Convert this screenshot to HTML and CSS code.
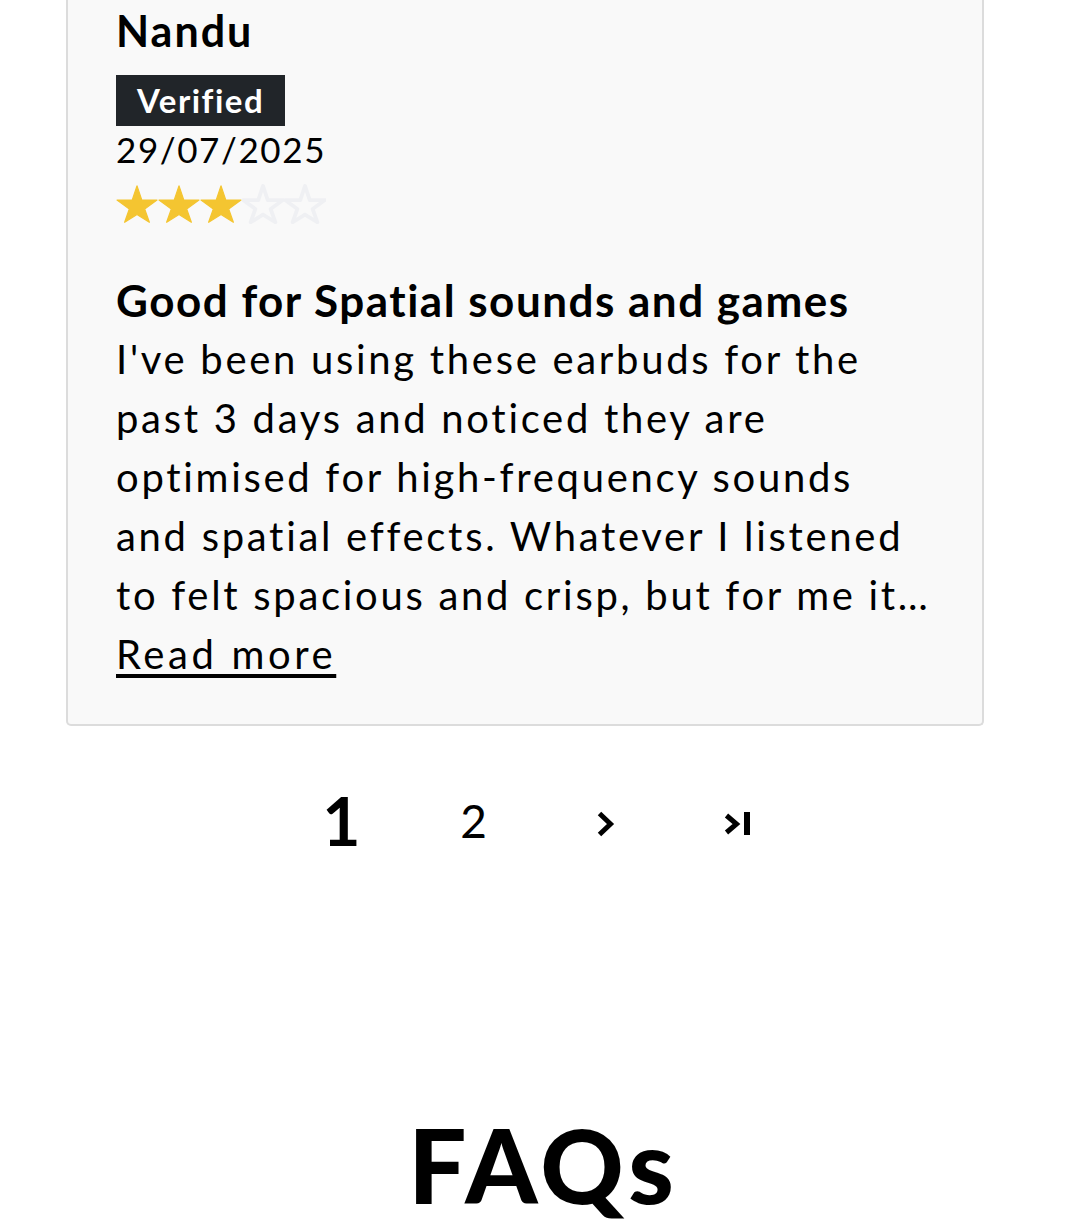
FILE: index.html
```html
<!DOCTYPE html>
<html lang="en">
<head>
<meta charset="utf-8">
<title>Reviews</title>
<link rel="stylesheet" href="styles.css">
</head>
<body>
<main class="page">
  <div class="card-wrap">
    <article class="review-card">
      <div class="reviewer">Nandu</div>
      <span class="badge">Verified</span>
      <div class="date">29/07/2025</div>
      <div class="stars" aria-label="3 out of 5 stars">
        <svg class="star full" viewBox="0 0 100 92"><polygon points="50,3 61.23,36.55 97.55,36.55 68.17,57.9 79.39,89.45 50,71.1 20.61,89.45 31.83,57.9 2.45,36.55 38.77,36.55"/></svg>
        <svg class="star full" viewBox="0 0 100 92"><polygon points="50,3 61.23,36.55 97.55,36.55 68.17,57.9 79.39,89.45 50,71.1 20.61,89.45 31.83,57.9 2.45,36.55 38.77,36.55"/></svg>
        <svg class="star full" viewBox="0 0 100 92"><polygon points="50,3 61.23,36.55 97.55,36.55 68.17,57.9 79.39,89.45 50,71.1 20.61,89.45 31.83,57.9 2.45,36.55 38.77,36.55"/></svg>
        <svg class="star empty" viewBox="0 0 100 92"><polygon points="50,3 61.23,36.55 97.55,36.55 68.17,57.9 79.39,89.45 50,71.1 20.61,89.45 31.83,57.9 2.45,36.55 38.77,36.55"/></svg>
        <svg class="star empty" viewBox="0 0 100 92"><polygon points="50,3 61.23,36.55 97.55,36.55 68.17,57.9 79.39,89.45 50,71.1 20.61,89.45 31.83,57.9 2.45,36.55 38.77,36.55"/></svg>
      </div>
      <h3 class="review-title">Good for Spatial sounds and games</h3>
      <p class="review-body">I've been using these earbuds for the past 3 days and noticed they are optimised for high-frequency sounds and spatial effects. Whatever I listened to felt spacious and crisp, but for me it lacks the deep bass punch that I usually prefer when listening to music.</p>
      <a class="read-more" href="#">Read more</a>
    </article>
  </div>

  <nav class="pagination" aria-label="Pagination">
    <span class="page-num current">1</span>
    <a class="page-num" href="#">2</a>
    <a class="page-icon" href="#" aria-label="Next page">
      <svg width="18" height="26" viewBox="0 0 18 26"><path d="M2.5 2.5l11 10.5-11 10.5" fill="none" stroke="#000" stroke-width="5"/></svg>
    </a>
    <a class="page-icon" href="#" aria-label="Last page">
      <svg width="28" height="26" viewBox="0 0 28 26"><path d="M2.5 4.5l10 8.5-10 8.5" fill="none" stroke="#000" stroke-width="5"/><rect x="20" y="1" width="6" height="23" fill="#000"/></svg>
    </a>
  </nav>

  <h2 class="faqs">FAQs</h2>
</main>
</body>
</html>
```

FILE: styles.css
```css
html, body {
  margin: 0;
  padding: 0;
  background: #fff;
}

body {
  font-family: "Lato", "Open Sans", sans-serif;
  color: #000;
}

.card-wrap {
  padding: 0 95px 0 66px;
}

.review-card {
  margin-top: -40px;
  background: #f9f9f9;
  border: 2px solid #dcdcdc;
  border-top: none;
  border-radius: 0 0 5px 5px;
  padding: 46px 48px 40px 48px;
  display: flex;
  flex-direction: column;
  align-items: flex-start;
}

.reviewer {
  font-size: 43px;
  font-weight: 700;
  line-height: 50px;
  letter-spacing: 2px;
}

.badge {
  margin-top: 19px;
  background: #212529;
  color: #fff;
  font-size: 33px;
  font-weight: 700;
  line-height: 51px;
  letter-spacing: 1.5px;
  padding: 0 21px;
}

.date {
  margin-top: 0;
  font-size: 35px;
  line-height: 46px;
  letter-spacing: 1.6px;
}

.stars {
  display: flex;
  margin-top: 12px;
}

.star {
  width: 42px;
  height: 40px;
}

.star.full polygon {
  fill: #f4c531;
  stroke: #f4c531;
  stroke-width: 3;
  stroke-linejoin: round;
}

.star.empty polygon {
  fill: none;
  stroke: #eff0f3;
  stroke-width: 9;
  stroke-linejoin: round;
}

.review-title {
  margin: 47px 0 0;
  font-size: 44px;
  font-weight: 700;
  line-height: 59px;
  letter-spacing: 1.5px;
}

.review-body {
  margin: 0;
  font-size: 40px;
  line-height: 59px;
  letter-spacing: 2.7px;
  display: -webkit-box;
  -webkit-line-clamp: 5;
  -webkit-box-orient: vertical;
  overflow: hidden;
}

.read-more {
  color: #000;
  font-size: 40px;
  line-height: 59px;
  letter-spacing: 3.6px;
  text-decoration: underline;
  text-decoration-thickness: 4px;
  text-underline-offset: 5px;
}

.pagination {
  display: flex;
  justify-content: center;
  align-items: center;
  margin-top: 65px;
  height: 60px;
}

.page-num, .page-icon {
  width: 132px;
  display: flex;
  justify-content: center;
  align-items: center;
  color: #000;
  text-decoration: none;
}

.page-icon svg {
  margin-top: 6px;
}

.page-num {
  font-size: 46px;
  line-height: 60px;
}

.page-num.current {
  font-size: 66px;
  font-weight: 700;
}

.faqs {
  margin: 253px 0 0;
  padding-left: 8px;
  text-align: center;
  font-size: 103px;
  font-weight: 900;
  letter-spacing: 5px;
  line-height: 120px;
}
```
